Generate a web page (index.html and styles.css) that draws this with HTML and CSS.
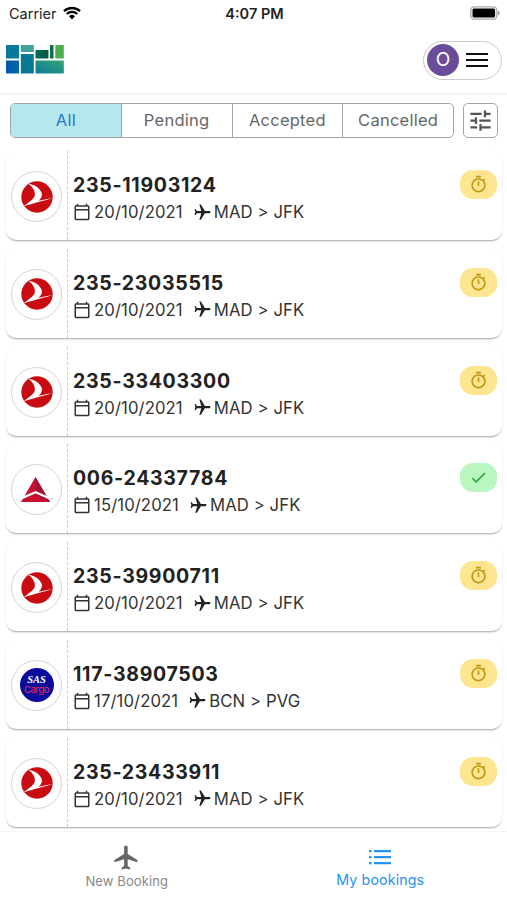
FILE: index.html
```html
<!DOCTYPE html>
<html lang="en">

<head>
    <meta charset="UTF-8">
    <meta name="viewport" content="width=device-width, initial-scale=1.0">
    <title>My bookings</title>
    <link rel="stylesheet" href="styles.css">
</head>

<body>
    <!-- Shared icons -->
    <svg class="icon-defs" width="0" height="0">
        <symbol id="calendar" viewBox="0 0 24 24">
            <path d="M20 3h-1V1h-2v2H7V1H5v2H4c-1.1 0-2 .9-2 2v16c0 1.1.9 2 2 2h16c1.1 0 2-.9 2-2V5c0-1.1-.9-2-2-2zm0 2v3H4V5h16zM4 21V10h16v11H4z" />
        </symbol>
        <symbol id="plane" viewBox="0 0 24 24">
            <path d="M21 16v-2l-8-5V3.5c0-.83-.67-1.5-1.5-1.5S10 2.67 10 3.5V9l-8 5v2l8-2.5V19l-2 1.5V22l3.5-1 3.5 1v-1.5L13 19v-5.5l8 2.5z" />
        </symbol>
        <symbol id="timer" viewBox="0 0 24 24">
            <path d="M9 1h6v2H9zM19.03 7.39l1.42-1.42c-.43-.51-.9-.99-1.41-1.41l-1.42 1.42C16.07 4.74 14.12 4 12 4c-4.97 0-9 4.03-9 9s4.02 9 9 9 9-4.03 9-9c0-2.12-.74-4.07-1.97-5.61zM12 20c-3.87 0-7-3.13-7-7s3.13-7 7-7 7 3.13 7 7-3.13 7-7 7zM11 8h2v6h-2z" />
        </symbol>
        <symbol id="check" viewBox="0 0 24 24">
            <path d="M9 16.17L4.83 12l-1.42 1.41L9 19 21 7l-1.41-1.41z" />
        </symbol>
        <symbol id="turkish" viewBox="0 0 32 32">
            <circle cx="16" cy="16" r="15.7" fill="#c90c12" />
            <path d="M7 2.500C13 3.500 18.500 6.500 20.500 11.500C21.800 15 19.800 18 17.500 19.700L31.500 17C24 19.800 14 21.500 2.500 25.500C7 21.500 13 18.500 13.800 14.500C14.500 10 11.500 5.500 7 2.500Z" fill="#fff" />
        </symbol>
        <symbol id="delta" viewBox="0 0 32 26">
            <path d="M14.500 0L29 25H0Z" fill="#c8102e" />
            <path d="M14.500 0L29 25L14.500 18Z" fill="#a01331" />
            <path d="M-1 22L14.500 15.300L30 22" fill="none" stroke="#fff" stroke-width="2.2" />
            <circle cx="31" cy="21.500" r=".7" fill="#999" />
        </symbol>
    </svg>

    <div class="status-bar">
        <div class="carrier">
            Carrier
            <svg class="wifi" viewBox="0 0 18 14">
                <path d="M1 5.200a11.500 11.500 0 0 1 16 0M3.800 8a7.500 7.500 0 0 1 10.400 0" />
                <path class="wifi-dot" d="M6 10.300a4.300 4.300 0 0 1 6 0L9 13.500z" />
            </svg>
        </div>
        <div class="time">4:07 PM</div>
        <svg class="battery" viewBox="0 0 30 14">
            <rect x=".8" y=".8" width="26" height="12.400" rx="3.500" fill="#fff" stroke="#aaa" stroke-width="1.300" />
            <rect x="2.500" y="2.500" width="22.600" height="9" rx="1.500" fill="#000" />
            <path d="M28 4.500a2.700 2.700 0 0 1 0 5z" fill="#999" />
        </svg>
    </div>

    <header class="header">
        <svg class="logo" viewBox="0 0 58 29">
            <defs>
                <linearGradient id="g1" x1="0" x2="1"><stop stop-color="#0677a2" /><stop offset="1" stop-color="#087b93" /></linearGradient>
                <linearGradient id="g2" x1="0" x2="1"><stop stop-color="#0057ad" /><stop offset="1" stop-color="#0269a4" /></linearGradient>
                <linearGradient id="g3" x1="0" x2="1" y1="1" y2="0"><stop stop-color="#087c9c" /><stop offset="1" stop-color="#38a474" /></linearGradient>
                <linearGradient id="g4" x1="0" x2="1"><stop stop-color="#036b60" /><stop offset="1" stop-color="#06573c" /></linearGradient>
            </defs>
            <rect x="0" y="0" width="13" height="13.500" fill="url(#g1)" />
            <rect x="0" y="15.500" width="13" height="13" fill="url(#g2)" />
            <rect x="14.800" y="0" width="13" height="7" fill="#43a19b" />
            <rect x="14.800" y="9" width="13" height="19.500" fill="#087990" />
            <rect x="29.500" y="5" width="13" height="8.500" fill="url(#g4)" />
            <rect x="44" y="0" width="3.500" height="13.500" fill="#086d4a" />
            <rect x="49.300" y="0" width="8.500" height="13.500" fill="#4eb04d" />
            <rect x="29.500" y="15.500" width="28.300" height="13" fill="url(#g3)" />
        </svg>
        <div class="user-menu">
            <div class="avatar">O</div>
            <div class="hamburger"><span></span><span></span><span></span></div>
        </div>
    </header>

    <main class="content">
        <div class="filters">
            <div class="tabs">
                <div class="tab active">All</div>
                <div class="tab">Pending</div>
                <div class="tab">Accepted</div>
                <div class="tab">Cancelled</div>
            </div>
            <div class="filter-btn">
                <svg viewBox="0 0 24 24">
                    <path d="M3 17v2h6v-2H3zM3 5v2h10V5H3zm10 16v-2h8v-2h-8v-2h-2v6h2zM7 9v2H3v2h4v2h2V9H7zm14 4v-2H11v2h10zm-6-4h2V7h4V5h-4V3h-2v6z" />
                </svg>
            </div>
        </div>

        <div class="bookings">
            <div class="card">
                <div class="airline"><div class="airline-logo"><svg><use href="#turkish" /></svg></div></div>
                <div class="info">
                    <div class="awb">235-11903124</div>
                    <div class="details">
                        <svg class="calendar"><use href="#calendar" /></svg><span>20/10/2021</span>
                        <svg class="plane"><use href="#plane" /></svg><span>MAD &gt; JFK</span>
                    </div>
                </div>
                <div class="badge pending"><svg><use href="#timer" /></svg></div>
            </div>

            <div class="card">
                <div class="airline"><div class="airline-logo"><svg><use href="#turkish" /></svg></div></div>
                <div class="info">
                    <div class="awb">235-23035515</div>
                    <div class="details">
                        <svg class="calendar"><use href="#calendar" /></svg><span>20/10/2021</span>
                        <svg class="plane"><use href="#plane" /></svg><span>MAD &gt; JFK</span>
                    </div>
                </div>
                <div class="badge pending"><svg><use href="#timer" /></svg></div>
            </div>

            <div class="card">
                <div class="airline"><div class="airline-logo"><svg><use href="#turkish" /></svg></div></div>
                <div class="info">
                    <div class="awb">235-33403300</div>
                    <div class="details">
                        <svg class="calendar"><use href="#calendar" /></svg><span>20/10/2021</span>
                        <svg class="plane"><use href="#plane" /></svg><span>MAD &gt; JFK</span>
                    </div>
                </div>
                <div class="badge pending"><svg><use href="#timer" /></svg></div>
            </div>

            <div class="card">
                <div class="airline"><div class="airline-logo"><svg><use href="#delta" /></svg></div></div>
                <div class="info">
                    <div class="awb">006-24337784</div>
                    <div class="details">
                        <svg class="calendar"><use href="#calendar" /></svg><span>15/10/2021</span>
                        <svg class="plane"><use href="#plane" /></svg><span>MAD &gt; JFK</span>
                    </div>
                </div>
                <div class="badge accepted"><svg><use href="#check" /></svg></div>
            </div>

            <div class="card">
                <div class="airline"><div class="airline-logo"><svg><use href="#turkish" /></svg></div></div>
                <div class="info">
                    <div class="awb">235-39900711</div>
                    <div class="details">
                        <svg class="calendar"><use href="#calendar" /></svg><span>20/10/2021</span>
                        <svg class="plane"><use href="#plane" /></svg><span>MAD &gt; JFK</span>
                    </div>
                </div>
                <div class="badge pending"><svg><use href="#timer" /></svg></div>
            </div>

            <div class="card">
                <div class="airline"><div class="airline-logo"><div class="sas"><b>SAS</b><span>Cargo</span></div></div></div>
                <div class="info">
                    <div class="awb">117-38907503</div>
                    <div class="details">
                        <svg class="calendar"><use href="#calendar" /></svg><span>17/10/2021</span>
                        <svg class="plane"><use href="#plane" /></svg><span>BCN &gt; PVG</span>
                    </div>
                </div>
                <div class="badge pending"><svg><use href="#timer" /></svg></div>
            </div>

            <div class="card">
                <div class="airline"><div class="airline-logo"><svg><use href="#turkish" /></svg></div></div>
                <div class="info">
                    <div class="awb">235-23433911</div>
                    <div class="details">
                        <svg class="calendar"><use href="#calendar" /></svg><span>20/10/2021</span>
                        <svg class="plane"><use href="#plane" /></svg><span>MAD &gt; JFK</span>
                    </div>
                </div>
                <div class="badge pending"><svg><use href="#timer" /></svg></div>
            </div>
        </div>
    </main>

    <nav class="bottom-nav">
        <div class="nav-item">
            <svg><use href="#plane" /></svg>
            <span>New Booking</span>
        </div>
        <div class="nav-item active">
            <svg viewBox="0 0 24 24">
                <path d="M1 5h2.500v2.300H1zM1 11h2.500v2.300H1zM1 17h2.500v2.300H1zM6 5h17v2.300H6zM6 11h17v2.300H6zM6 17h17v2.300H6z" />
            </svg>
            <span>My bookings</span>
        </div>
    </nav>
</body>

</html>
```
FILE: styles.css
```css
* {
    box-sizing: border-box;
}

body {
    margin: 0;
    height: 900px;
    display: flex;
    flex-direction: column;
    overflow: hidden;
    background-color: #fff;
    color: #222;
    font-family: Inter, Roboto, sans-serif;
}

svg {
    fill: currentColor;
    flex-shrink: 0;
}

.icon-defs {
    display: none;
}

.status-bar {
    display: grid;
    grid-template-columns: 1fr auto 1fr;
    align-items: center;
    height: 27px;
    padding: 0 7px 0 9px;
    font-size: 14.5px;
    color: #222;
}

.carrier {
    display: flex;
    align-items: center;
    gap: 6px;
}

.wifi {
    width: 18px;
    height: 14px;
    margin-top: -2px;
    fill: none;
    stroke: #000;
    stroke-width: 2.4;
}

.wifi-dot {
    fill: #000;
    stroke: none;
}

.time {
    font-weight: 600;
}

.battery {
    width: 30px;
    height: 14px;
    margin-top: -1px;
    justify-self: end;
}

.header {
    display: flex;
    align-items: center;
    justify-content: space-between;
    height: 66px;
    padding: 0 5px 0 6px;
}

.logo {
    width: 58px;
    height: 29px;
    margin-top: -1px;
}

.user-menu {
    display: flex;
    align-items: center;
    gap: 7px;
    width: 79px;
    height: 39px;
    padding-left: 3px;
    border: 1px solid #ccc;
    border-radius: 20px;
}

.avatar {
    width: 32px;
    height: 32px;
    border-radius: 50%;
    background-color: #6b4c98;
    color: #fff;
    font-size: 19px;
    line-height: 32px;
    text-align: center;
}

.hamburger {
    display: flex;
    flex-direction: column;
    gap: 3.5px;
}

.hamburger span {
    width: 22px;
    height: 2.5px;
    background-color: #111;
}

.content {
    height: 738px;
    border-top: 2px solid #f4f4f4;
    overflow: hidden;
}

.filters {
    display: flex;
    gap: 9px;
    padding: 8px 9px 0 10px;
}

.tabs {
    display: flex;
    width: 444px;
    height: 35px;
    border: 1px solid #a5a5a5;
    border-radius: 5px;
    overflow: hidden;
}

.tab {
    flex: 1;
    font-size: 16.5px;
    letter-spacing: 0.25px;
    line-height: 33px;
    text-align: center;
    color: #666;
}

.tab + .tab {
    border-left: 1px solid #a5a5a5;
}

.tab.active {
    background-color: #b5e7ef;
    color: #2478c4;
}

.filter-btn {
    display: flex;
    align-items: center;
    justify-content: center;
    width: 35px;
    height: 35px;
    border: 1px solid #a5a5a5;
    border-radius: 5px;
    color: #555;
}

.filter-btn svg {
    width: 27px;
    height: 27px;
}

.bookings {
    display: flex;
    flex-direction: column;
    gap: 8.75px;
    padding: 13px 5px 0 6px;
}

.card {
    display: flex;
    height: 89px;
    flex-shrink: 0;
    border-radius: 10px;
    background-color: #fff;
    box-shadow: 0 2px 2px -1px rgba(0, 0, 0, 0.28), 0 1px 2px rgba(0, 0, 0, 0.1);
}

.airline {
    display: flex;
    align-items: center;
    width: 62px;
    padding: 2px 0 0 5px;
    border-right: 1.5px dashed #ccc;
}

.airline-logo {
    display: flex;
    align-items: center;
    justify-content: center;
    width: 51px;
    height: 51px;
    border: 1px solid #d5d5d5;
    border-radius: 50%;
}

.airline-logo svg {
    width: 32px;
    height: 32px;
}

.sas {
    display: flex;
    flex-direction: column;
    align-items: center;
    justify-content: center;
    width: 34px;
    height: 34px;
    border-radius: 50%;
    background-color: #0a0a9c;
    color: #fff;
}

.sas b {
    font: italic 900 10.5px/10px "Liberation Serif", serif;
}

.sas span {
    font-size: 9.5px;
    letter-spacing: -0.4px;
    line-height: 10px;
    color: #e8305a;
}

.info {
    flex: 1;
    padding: 21px 0 0 5px;
}

.awb {
    font-size: 19.5px;
    font-weight: 650;
    letter-spacing: 0.7px;
    line-height: 26px;
}

.details {
    display: flex;
    align-items: center;
    height: 28px;
    font-size: 16.7px;
    letter-spacing: 0.1px;
    color: #333;
    white-space: nowrap;
}

.calendar {
    width: 18px;
    height: 18px;
    margin-right: 3px;
}

.plane {
    width: 19px;
    height: 19px;
    margin: 0 2px 0 10px;
    transform: rotate(90deg);
    color: #222;
}

.badge {
    display: flex;
    align-items: center;
    justify-content: center;
    width: 37px;
    height: 29px;
    margin: 19px 5px 0 0;
    border-radius: 13px;
}

.badge svg {
    width: 19px;
    height: 19px;
}

.badge.pending {
    background-color: #fee590;
    color: #bd9710;
}

.badge.accepted {
    background-color: #baf6bf;
    color: #27a53a;
}

.bottom-nav {
    display: flex;
    flex: 1;
    border-top: 1px solid #f4f4f4;
    background-color: #fff;
}

.nav-item {
    display: flex;
    flex: 1;
    flex-direction: column;
    align-items: center;
    padding-top: 11px;
    font-size: 13px;
    letter-spacing: 0.1px;
    color: #888;
}

.nav-item svg {
    width: 29px;
    height: 29px;
    color: #666;
}

.nav-item span {
    line-height: 18px;
}

.nav-item.active {
    font-size: 14.2px;
    letter-spacing: 0.15px;
    color: #2494ee;
}

.nav-item.active svg {
    width: 24px;
    height: 28px;
    color: #2494ee;
}
```
